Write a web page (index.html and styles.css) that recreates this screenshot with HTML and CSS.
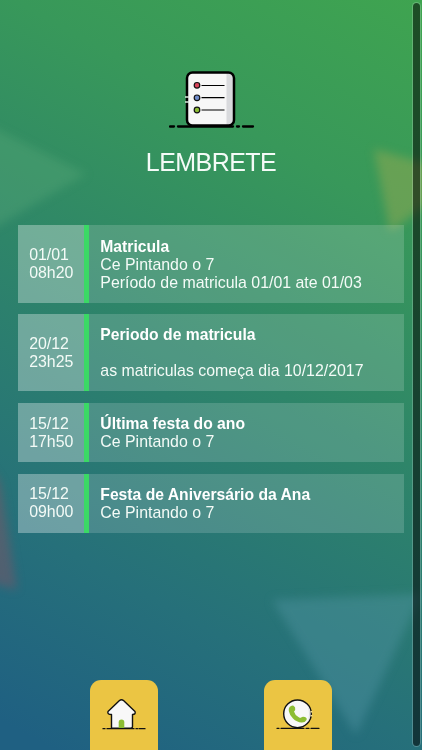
FILE: index.html
```html
<!DOCTYPE html>
<html lang="pt-br">
<head>
  <meta charset="utf-8">
  <title>Lembrete</title>
  <link rel="stylesheet" href="styles.css">
</head>
<body>
  <svg class="shapes" viewBox="0 0 422 750">
    <polygon points="-40,111 86,174 -40,248" fill="#5fae7c" opacity=".32"/>
    <polygon points="374,149 450,170 450,187 390,232" fill="#a0ab50" opacity=".45"/>
    <polygon points="-30,440 0,482 17,590 -30,577" fill="#a34a5c" opacity=".35"/>
    <polygon points="272,600 422,594 356,735" fill="#5799a8" opacity=".38"/>
  </svg>

  <div class="page">
    <header class="header">
      <svg class="header-icon" width="86" height="60" viewBox="0 0 86 60">
        <rect x="18" y="2.500" width="47" height="53" rx="5.500" fill="#f7f7f7"/>
        <path d="M57.500 3h3q4 1 4 5v42q0 4-4 5h-3z" fill="#d9dadd"/>
        <rect x="18" y="2.500" width="47" height="53" rx="5.500" fill="none" stroke="#000" stroke-width="2.500"/>
        <path d="M16 27h4M16 32h4" stroke="#d7e8dc" stroke-width="1.300"/>
        <path d="M32.500 15.500h23M32.500 27.700h23M32.500 40h23" stroke="#000" stroke-width="1.200"/>
        <g stroke="#111" stroke-width="1.200">
          <circle cx="28" cy="15.300" r="2.800" fill="#d9445b"/>
          <circle cx="28" cy="27.800" r="2.800" fill="#6f8ccb"/>
          <circle cx="28" cy="40" r="2.800" fill="#8dbd35"/>
        </g>
        <path d="M1 56.500h4M9 56.500h55M68 56.500h2M74 56.500h10" stroke="#000" stroke-width="2.300" stroke-linecap="round"/>
      </svg>
      <h1>LEMBRETE</h1>
    </header>

    <ul class="list">
      <li class="item">
        <div class="date">01/01<br>08h20</div>
        <div class="text"><strong>Matricula</strong><br>Ce Pintando o 7<br>Período de matricula 01/01 ate 01/03</div>
      </li>
      <li class="item">
        <div class="date">20/12<br>23h25</div>
        <div class="text"><strong>Periodo de matricula</strong><br><br>as matriculas começa dia 10/12/2017</div>
      </li>
      <li class="item">
        <div class="date">15/12<br>17h50</div>
        <div class="text"><strong>Última festa do ano</strong><br>Ce Pintando o 7</div>
      </li>
      <li class="item">
        <div class="date">15/12<br>09h00</div>
        <div class="text"><strong>Festa de Aniversário da Ana</strong><br>Ce Pintando o 7</div>
      </li>
    </ul>

    <nav class="menu">
      <a class="tab">
        <svg width="44" height="34" viewBox="0 0 44 34">
          <path d="M9.500 31.300V17.500Q5 17.500 6 14.600L17.500 3.600Q19.500 1.700 21.500 3.600L33 14.600Q34 17.500 30.500 17.500V29.500Q30.500 31.300 28.500 31.300Z" fill="#f8f8f8" stroke="#111" stroke-width="1.400" stroke-linejoin="round"/>
          <path d="M16.700 31V25.200a2.800 2.800 0 0 1 5.600 0V31z" fill="#8cbd33"/>
          <path d="M1 31.700h2M5 31.700h27M34 31.700h1.500M37 31.700h6" stroke="#111" stroke-width="1.300" stroke-linecap="round"/>
        </svg>
      </a>
      <a class="tab">
        <svg width="44" height="34" viewBox="0 0 44 34">
          <circle cx="21.500" cy="16.800" r="13.800" fill="#f8f8f8" stroke="#111" stroke-width="1.400"/>
          <path d="M31.500 8q5 9 0 18 3-9 0-18" fill="#d9dadd"/>
          <path d="M35.400 14v1.500M35.400 18v1.500" stroke="#f5e3a0" stroke-width="1.800"/>
          <path d="M13.600 10q2-2.200 4-1.300 2.200 1.300 1.600 4-.2 1.200-1.200 1.800.8 3.400 4.400 5.400 1.300.8 2.500.9 1.500-1.500 3.900-.7 2.600 1 1.700 3-1.400 2.600-4.800 2.500-5-.3-8.700-4-3.500-3.500-4.200-7.500-.4-2.500.8-4.100z" fill="#8cbd33"/>
          <path d="M1 31.300h2M5 31.300h23M30 31.300h3M35 31.300h8" stroke="#111" stroke-width="1.300" stroke-linecap="round"/>
        </svg>
      </a>
    </nav>
  </div>

  <div class="scrollbar"></div>
</body>
</html>
```

FILE: styles.css
```css
* {
  box-sizing: border-box;
}

body {
  margin: 0;
  height: 750px;
  position: relative;
  overflow: hidden;
  font-family: "Liberation Sans", Arial, sans-serif;
  color: #f4fbf7;
  background: linear-gradient(29deg, #1f6082 3%, #26707a 24%, #2e8569 52%, #38985a 77%, #3fa450 100%);
}

.shapes {
  position: absolute;
  top: 0;
  left: 0;
  width: 422px;
  height: 750px;
  overflow: visible;
  filter: blur(5px);
}

.page {
  position: relative;
  height: 750px;
  padding: 70px 18px 0;
  display: flex;
  flex-direction: column;
}

.header {
  height: 155px;
  display: flex;
  flex-direction: column;
  align-items: center;
}

.header-icon {
  margin-left: 2px;
}

.header h1 {
  margin: 18px 0 0;
  font-size: 25px;
  line-height: 29px;
  font-weight: normal;
  letter-spacing: -0.55px;
}

.list {
  margin: 0;
  padding: 0;
  list-style: none;
  display: flex;
  flex-direction: column;
  gap: 11.4px;
}

.item {
  display: flex;
  font-size: 15.9px;
  line-height: 18px;
  background: rgba(255, 255, 255, 0.16);
}

.date {
  width: 71px;
  padding: 0 0 0 11.2px;
  display: flex;
  align-items: center;
  background: rgba(255, 255, 255, 0.2);
  border-right: 5px solid #3bd965;
}

.text {
  padding: 12.5px 11px 11px 11.3px;
  white-space: nowrap;
}

.text strong {
  font-size: 15.7px;
  color: #fff;
}

.menu {
  margin-top: auto;
  padding: 0 19px;
  display: flex;
  justify-content: space-around;
}

.tab {
  width: 68px;
  height: 70px;
  padding-top: 17px;
  text-align: center;
  border-radius: 11px 11px 0 0;
  background: #ebc543;
}

.scrollbar {
  position: absolute;
  top: 2px;
  right: 1px;
  width: 9px;
  height: 745px;
  border: 1px solid rgba(255, 255, 255, 0.2);
  border-radius: 5px;
  background: rgba(0, 0, 0, 0.52);
  background-clip: padding-box;
}
```
